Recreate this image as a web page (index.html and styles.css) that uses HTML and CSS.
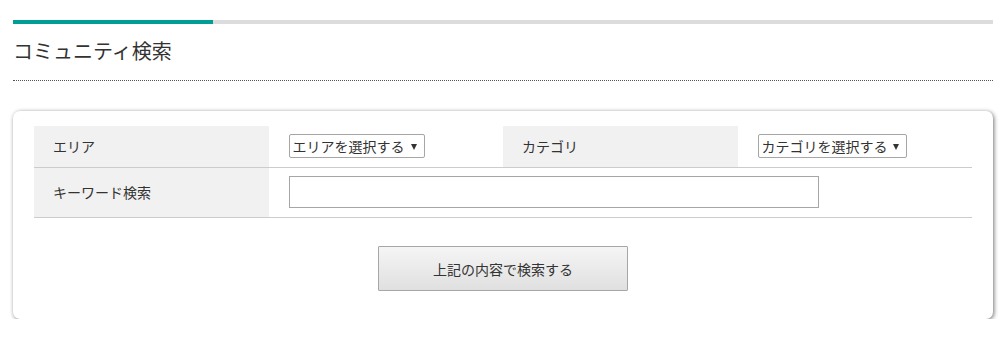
FILE: index.html
```html
<!DOCTYPE html>
<html lang="ja">
<head>
    <meta charset="UTF-8">
    <meta name="viewport" content="width=device-width, initial-scale=1.0">
    <title>コミュニティ検索</title>
    <link rel="stylesheet" href="styles.css">
</head>
<body>
    <div class="wrap">
        <div class="heading">
            <div class="heading-bar"><span class="heading-bar-fill"></span></div>
            <h2>コミュニティ検索</h2>
        </div>

        <form class="search-box" onsubmit="return false;">
            <table class="search-table">
                <tr class="row-short">
                    <th>エリア</th>
                    <td>
                        <span class="select-wrap">
                            <select class="select-area">
                                <option>エリアを選択する</option>
                            </select>
                        </span>
                    </td>
                    <th>カテゴリ</th>
                    <td>
                        <span class="select-wrap">
                            <select class="select-category">
                                <option>カテゴリを選択する</option>
                            </select>
                        </span>
                    </td>
                </tr>
                <tr class="row-tall">
                    <th>キーワード検索</th>
                    <td colspan="3">
                        <input type="text" class="keyword">
                    </td>
                </tr>
            </table>
            <div class="actions">
                <button type="submit">上記の内容で検索する</button>
            </div>
        </form>
    </div>
</body>
</html>
```

FILE: styles.css
```css
body {
    margin: 0;
    padding: 0;
    background-color: #fff;
    color: #333;
    font-family: "Noto Sans CJK JP", "Noto Sans", sans-serif;
    font-size: 14px;
}

.wrap {
    width: 980px;
    padding: 20px 0 0 13px;
}

.heading-bar {
    height: 4px;
    background-color: #dcdcdc;
}

.heading-bar-fill {
    display: block;
    width: 200px;
    height: 4px;
    background-color: #009e94;
}

h2 {
    margin: 0;
    height: 56px;
    line-height: 54px;
    font-size: 20px;
    font-weight: normal;
    color: #333;
    border-bottom: 1px dotted #555;
}

.search-box {
    margin-top: 30px;
    padding: 15px 21px 28px;
    background-color: #fff;
    border-radius: 7px;
    box-shadow: 1px 1px 4px rgba(0, 0, 0, 0.55);
}

.search-table {
    width: 100%;
    border-collapse: collapse;
    table-layout: fixed;
}

.search-table th,
.search-table td {
    padding: 0 0 2px 20px;
    border-bottom: 1px solid #ccc;
    text-align: left;
    vertical-align: middle;
}

.search-table th {
    padding-left: 19px;
    background-color: #f1f1f1;
    font-weight: normal;
    color: #333;
}

.row-short th,
.row-short td {
    height: 39px;
}

.row-tall th,
.row-tall td {
    height: 47px;
}

.select-wrap {
    position: relative;
    display: inline-block;
}

.select-wrap::after {
    content: "";
    position: absolute;
    right: 8px;
    top: 10px;
    border-left: 3px solid transparent;
    border-right: 3px solid transparent;
    border-top: 6px solid #333;
    pointer-events: none;
}

select {
    -webkit-appearance: none;
    appearance: none;
    height: 24px;
    padding: 0 0 0 3px;
    border: 1px solid #a6a6a6;
    border-radius: 2px;
    background-color: #fff;
    color: #333;
    font-family: inherit;
    font-size: 14px;
    line-height: 22px;
}

.select-area {
    width: 136px;
}

.select-category {
    width: 149px;
}

.keyword {
    width: 530px;
    height: 32px;
    box-sizing: border-box;
    border: 1px solid #a6a6a6;
    border-radius: 0;
    display: block;
}

.actions {
    text-align: center;
    padding-top: 28px;
}

button {
    width: 250px;
    height: 45px;
    border: 1px solid #a6a6a6;
    border-radius: 1px;
    background: linear-gradient(#f5f5f5, #e0e0e0);
    color: #333;
    font-family: inherit;
    font-size: 14px;
    cursor: pointer;
}
```
